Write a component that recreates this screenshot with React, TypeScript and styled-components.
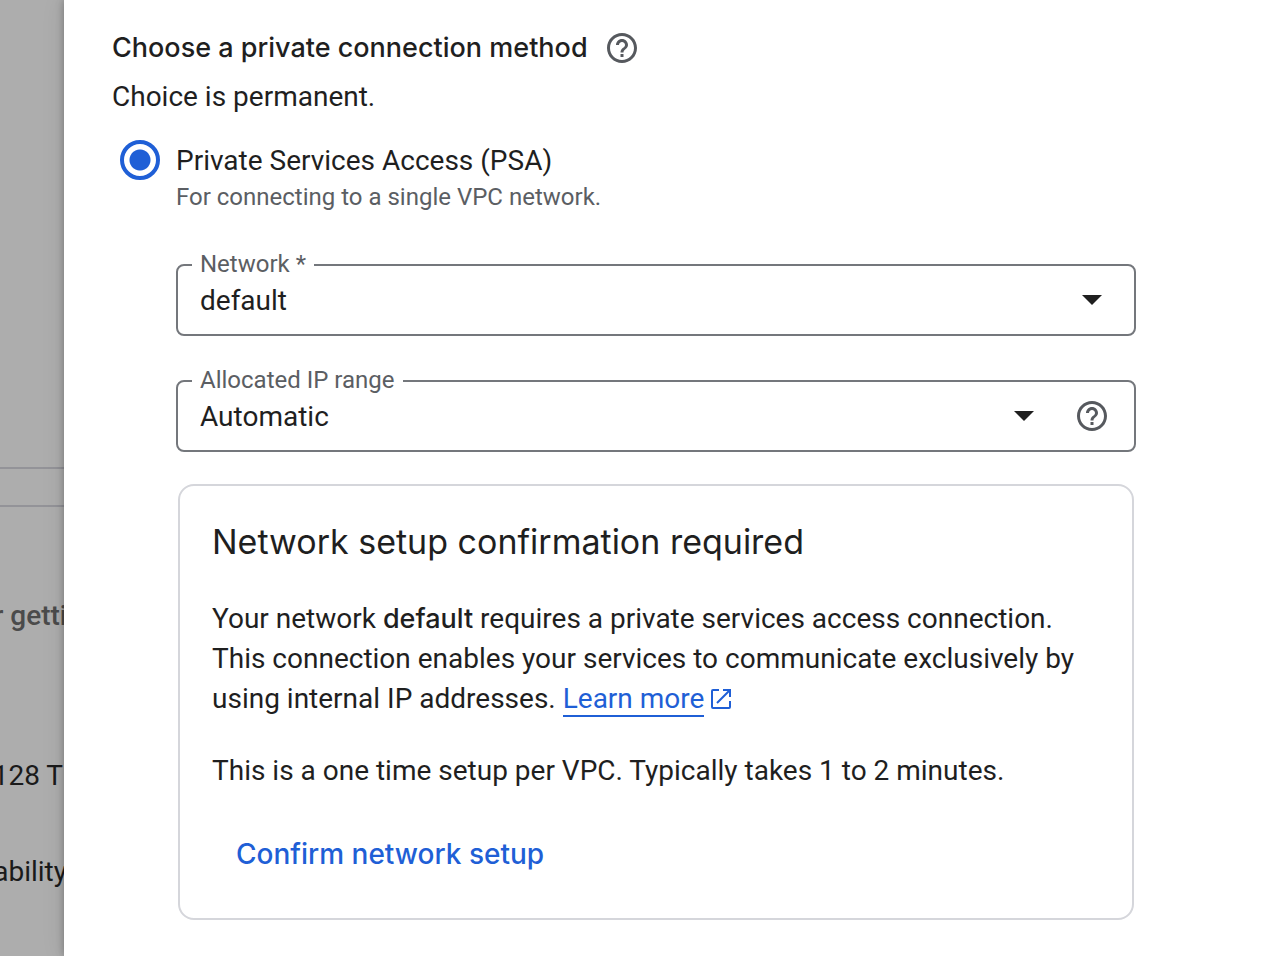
import React from "react";
import styled, { createGlobalStyle } from "styled-components";

const GlobalStyle = createGlobalStyle`
  *, *::before, *::after { box-sizing: border-box; }
  body {
    margin: 0;
    background: #adadad;
    color: #1f1f1f;
    font-family: Roboto, "Liberation Sans", sans-serif;
    font-size: 28px;
    line-height: 40px;
  }
`;

const displayFont = `"Google Sans", Inter, Roboto, sans-serif`;

const Page = styled.div`
  display: flex;
  min-height: 100vh;
`;

const Backdrop = styled.aside`
  flex: 0 0 64px;
  overflow: hidden;
  padding-top: 467px;
  background: #adadad;
`;

const Band = styled.div`
  height: 40px;
  border-top: 2px solid #939398;
  border-bottom: 2px solid #939398;
  margin-bottom: 89px;
`;

const Clipped = styled.p<{ $strong?: boolean; $bleed?: boolean; $gap?: number }>`
  display: flex;
  justify-content: flex-end;
  margin: 0 ${(p) => (p.$bleed ? -3 : 1)}px ${(p) => p.$gap ?? 0}px 0;
  white-space: nowrap;
  color: ${(p) => (p.$strong ? "#4b4b4b" : "#1a1a1a")};
  font-weight: ${(p) => (p.$strong ? 500 : 400)};
`;

const Panel = styled.main`
  position: relative;
  flex: 1;
  min-width: 0;
  padding: 28px 144px 36px 48px;
  background: #fff;
  box-shadow: 0 0 24px rgba(0, 0, 0, 0.08), 0 0 8px rgba(0, 0, 0, 0.3);
`;

const TitleRow = styled.div`
  display: flex;
  align-items: center;
  gap: 16px;
`;

const Title = styled.h2`
  margin: 0;
  font: 500 27px/40px ${displayFont};
`;

const HelpButton = styled.button`
  display: flex;
  padding: 0;
  border: 0;
  background: none;
  color: #56595e;
  cursor: pointer;
`;

const Note = styled.p`
  margin: 9px 0 23px;
`;

const Choice = styled.div`
  display: flex;
  align-items: flex-start;
  gap: 16px;
  padding-left: 8px;
`;

const ChoiceText = styled.div`
  padding-top: 1px;
`;

const Radio = styled.input`
  appearance: none;
  flex: none;
  width: 40px;
  height: 40px;
  margin: 0;
  border: 4px solid #1f5fd6;
  border-radius: 50%;
  background: radial-gradient(circle, #1f5fd6 0 10px, transparent 11px);
`;

const ChoiceLabel = styled.label`
  display: block;
`;

const Hint = styled.p`
  margin: 0;
  color: #5b5e63;
  font-size: 24px;
  line-height: 32px;
`;

const Details = styled.div`
  display: flex;
  flex-direction: column;
  gap: 32px;
  margin: 39px 0 0 64px;
`;

const Field = styled.fieldset`
  min-width: 0;
  margin: 0;
  padding: 0 24px 12px 14px;
  border: 2px solid #74777c;
  border-radius: 8px;
`;

const Legend = styled.legend`
  padding: 0 8px 2px;
  color: #5b5e63;
  font-size: 24px;
  line-height: 24px;
`;

const Control = styled.div`
  display: flex;
  align-items: center;
`;

const SelectWrap = styled.div`
  display: grid;
  flex: 1;
  align-items: center;

  > * { grid-area: 1 / 1; }
  > svg { justify-self: end; margin-right: 8px; pointer-events: none; }
`;

const Select = styled.select`
  appearance: none;
  width: 100%;
  height: 44px;
  padding: 2px 40px 0 8px;
  border: 0;
  background: none;
  color: inherit;
  font: inherit;
`;

const TrailingHelp = styled(HelpButton)`
  margin-left: 32px;
`;

const Card = styled.section`
  margin: 0 2px;
  padding: 32px 32px 28px;
  border: 2px solid #d5d6db;
  border-radius: 16px;
`;

const CardTitle = styled.h3`
  margin: 0 0 33px;
  font: 400 34px/48px ${displayFont};
`;

const Text = styled.p<{ $gap: number }>`
  margin: 0 0 ${(p) => p.$gap}px;

  b { font: 500 27px/1 ${displayFont}; }
`;

const Link = styled.a`
  color: #1f5fd6;
  text-decoration: none;

  span { border-bottom: 2px solid; }
  svg { margin-left: 3px; vertical-align: -5px; }
`;

const TextButton = styled.button`
  height: 72px;
  padding: 0 24px;
  border: 0;
  background: none;
  color: #1f5fd6;
  font: 500 28px/40px ${displayFont};
  cursor: pointer;
`;

const HelpIcon = () => (
  <svg width="36" height="36" viewBox="0 0 24 24" fill="currentColor" aria-hidden="true">
    <path d="M11 18h2v-2h-2v2zm1-16C6.48 2 2 6.48 2 12s4.48 10 10 10 10-4.480 10-10S17.520 2 12 2zm0 18c-4.410 0-8-3.590-8-8s3.590-8 8-8 8 3.590 8 8-3.590 8-8 8zm0-14c-2.210 0-4 1.790-4 4h2c0-1.100.9-2 2-2s2 .9 2 2c0 2-3 1.750-3 5h2c0-2.250 3-2.500 3-5 0-2.210-1.790-4-4-4z" />
  </svg>
);

const Arrow = () => (
  <svg width="20" height="10" viewBox="0 0 20 10" fill="#1f1f1f" aria-hidden="true">
    <path d="M0 0h20L10 10z" />
  </svg>
);

const ExternalIcon = () => (
  <svg width="28" height="28" viewBox="0 0 28 28" fill="none" stroke="currentColor" strokeWidth="2" aria-hidden="true">
    <path d="M12 5H6a1 1 0 0 0-1 1v16a1 1 0 0 0 1 1h16a1 1 0 0 0 1-1v-6M16 5h7v7M23 5 10 18" />
  </svg>
);

type SelectFieldProps = { id: string; label: string; value: string; help?: boolean };

const SelectField = ({ id, label, value, help }: SelectFieldProps) => (
  <Field>
    <Legend>
      <label htmlFor={id}>{label}</label>
    </Legend>
    <Control>
      <SelectWrap>
        <Select id={id} defaultValue={value}>
          <option value={value}>{value}</option>
        </Select>
        <Arrow />
      </SelectWrap>
      {help && (
        <TrailingHelp type="button" aria-label={label}>
          <HelpIcon />
        </TrailingHelp>
      )}
    </Control>
  </Field>
);

export default function App() {
  return (
    <Page>
      <GlobalStyle />
      <Backdrop>
        <Band />
        <Clipped $strong $bleed $gap={120}>r getti</Clipped>
        <Clipped $gap={56}>128 T</Clipped>
        <Clipped $bleed>ability</Clipped>
      </Backdrop>
      <Panel>
        <TitleRow>
          <Title>Choose a private connection method</Title>
          <HelpButton type="button" aria-label="Help">
            <HelpIcon />
          </HelpButton>
        </TitleRow>
        <Note>Choice is permanent.</Note>
        <Choice>
          <Radio type="radio" id="psa" name="method" defaultChecked />
          <ChoiceText>
            <ChoiceLabel htmlFor="psa">Private Services Access (PSA)</ChoiceLabel>
            <Hint>For connecting to a single VPC network.</Hint>
          </ChoiceText>
        </Choice>
        <Details>
          <SelectField id="network" label="Network *" value="default" />
          <SelectField id="range" label="Allocated IP range" value="Automatic" help />
          <Card>
            <CardTitle>Network setup confirmation required</CardTitle>
            <Text $gap={32}>
              Your network <b>default</b> requires a private services access connection. This
              connection enables your services to communicate exclusively by using internal IP
              addresses.{" "}
              <Link href="#learn-more">
                <span>Learn more</span>
                <ExternalIcon />
              </Link>
            </Text>
            <Text $gap={27}>This is a one time setup per VPC. Typically takes 1 to 2 minutes.</Text>
            <TextButton type="button">Confirm network setup</TextButton>
          </Card>
        </Details>
      </Panel>
    </Page>
  );
}
